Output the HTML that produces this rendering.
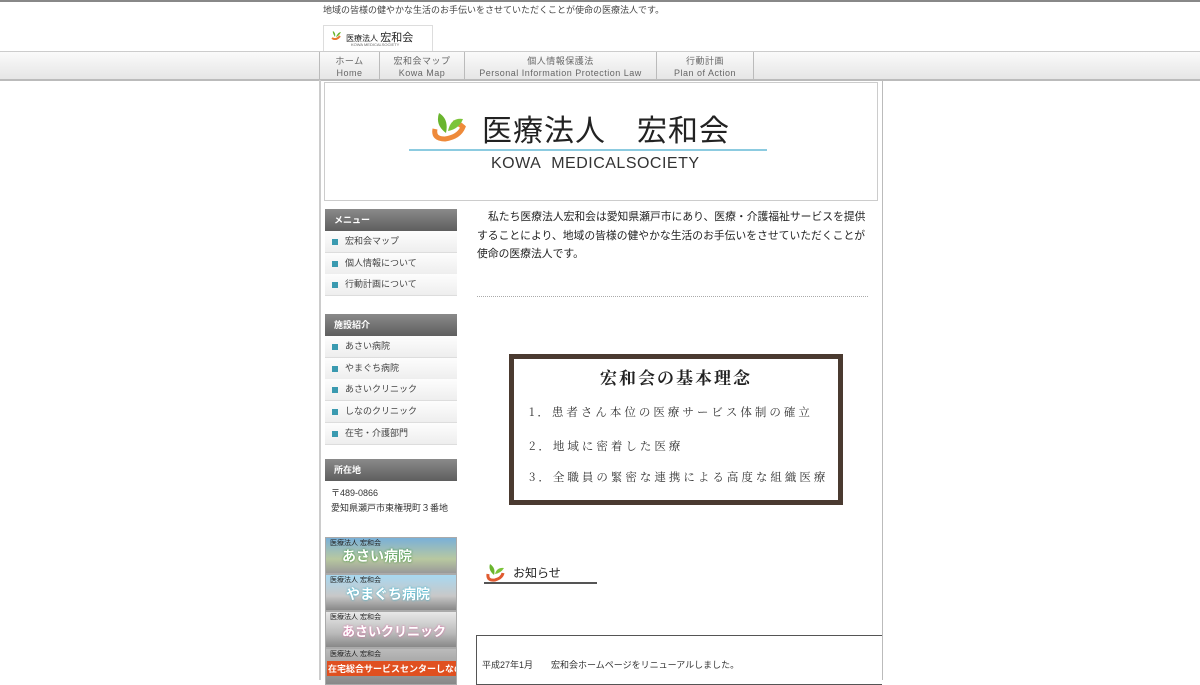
<!DOCTYPE html>
<html><head><meta charset="utf-8"><style>
*{margin:0;padding:0;box-sizing:border-box}
body{width:1200px;height:675px;overflow:hidden;background:#fff;font-family:"Liberation Sans","Noto Sans CJK JP",sans-serif;color:#333;position:relative}
.abs{position:absolute}
.tag{left:323px;top:3px;font-size:9px;color:#444}
.logo{left:323px;top:25px;width:110px;height:26px;border:1px solid #ddd;border-bottom:none;background:#fff}
.nav{left:0;top:51px;width:1200px;height:30px;background:linear-gradient(#fafafa,#e6e6e6);border-top:1px solid #ccc;border-bottom:2px solid #bbb}
.nav div{position:absolute;top:0;height:28px;border-right:1px solid #bbb;text-align:center;font-size:9px;color:#666;line-height:12px;padding-top:3px;letter-spacing:.5px}
.wrap{left:319px;top:80px;width:564px;height:600px;border-left:2px solid #ccc;border-right:1px solid #bbb}
.banner{left:324px;top:82px;width:554px;height:119px;border:1px solid #ccc;background:#fff}
.side h3{position:absolute;left:325px;width:132px;height:22px;background:linear-gradient(#8a8a8a,#5e5e5e);color:#fff;font-size:9px;font-weight:bold;line-height:22px;padding-left:9px}
.item{position:absolute;left:325px;width:132px;height:22px;background:linear-gradient(#fdfdfd,#eee);border-bottom:1px solid #ddd;font-size:9px;color:#444;line-height:21px;padding-left:20px}
.item:before{content:"";position:absolute;left:7px;top:8px;width:6px;height:6px;background:#3a9ab0}
.rib{position:absolute;left:325px;width:132px;height:37px;border:1px solid #aaa;overflow:hidden;white-space:nowrap}
</style></head><body>
<div class="abs" style="left:0;top:0;width:1200px;height:2px;background:#888"></div>
<div class="abs tag">地域の皆様の健やかな生活のお手伝いをさせていただくことが使命の医療法人です。</div>
<div class="abs logo">
 <svg class="abs" style="left:6px;top:4px" width="12" height="10"><path d="M2 8 Q6 11 10 6" stroke="#e87a30" stroke-width="2" fill="none"/><path d="M5 7 Q2 2 3 1 Q6 3 5 7Z M6 7 Q8 2 11 2 Q9 6 6 7Z" fill="#6ab52e"/></svg>
 <span class="abs" style="left:22px;top:3px;font-size:8px;color:#222">医療法人 <span style="font-size:11px">宏和会</span></span>
 <span class="abs" style="left:27px;top:16px;font-size:4px;color:#666">KOWA MEDICALSOCIETY</span>
</div>
<div class="abs nav">
 <div style="left:319px;width:61px;border-left:1px solid #bbb">ホーム<br>Home</div>
 <div style="left:380px;width:85px">宏和会マップ<br>Kowa Map</div>
 <div style="left:465px;width:192px">個人情報保護法<br>Personal Information Protection Law</div>
 <div style="left:657px;width:97px">行動計画<br>Plan of Action</div>
</div>
<div class="abs wrap"></div>
<div class="abs banner">
 <svg class="abs" style="left:104px;top:24px" width="38" height="36"><path d="M6 22 Q4 32 16 32 Q30 30 34 20 Q30 16 24 16" stroke="#ee8a3a" stroke-width="5" fill="none"/><path d="M17 26 Q6 18 10 6 Q20 12 17 26Z" fill="#6ab52e"/><path d="M19 24 Q22 10 34 12 Q30 22 19 24Z" fill="#7cc43a"/></svg>
 <div class="abs" style="left:157px;top:23px;font-size:30px;color:#222;letter-spacing:1px">医療法人　宏和会</div>
 <div class="abs" style="left:84px;top:66px;width:358px;height:2px;background:#8ccbe0"></div>
 <div class="abs" style="left:166px;top:72px;font-size:16px;color:#333;letter-spacing:.5px">KOWA&nbsp;&nbsp;MEDICALSOCIETY</div>
</div>
<div class="side">
 <h3 style="top:209px">メニュー</h3>
 <div class="item" style="top:231px">宏和会マップ</div>
 <div class="item" style="top:253px">個人情報について</div>
 <div class="item" style="top:274px">行動計画について</div>
 <h3 style="top:314px">施設紹介</h3>
 <div class="item" style="top:336px">あさい病院</div>
 <div class="item" style="top:358px">やまぐち病院</div>
 <div class="item" style="top:379px">あさいクリニック</div>
 <div class="item" style="top:401px">しなのクリニック</div>
 <div class="item" style="top:423px">在宅・介護部門</div>
 <h3 style="top:459px">所在地</h3>
 <div class="abs" style="left:331px;top:486px;font-size:9px;line-height:15px;color:#333">〒489-0866<br>愛知県瀬戸市東権現町３番地</div>
 <div class="rib" style="top:537px;background:linear-gradient(#7ab0d8,#b8c8a0 60%,#999)"><span class="abs" style="left:16px;top:8px;font-size:14px;color:#fff;font-weight:bold;text-shadow:0 0 2px #2a8a2a">あさい病院</span><span class="abs" style="left:4px;top:0;font-size:7px;color:#222">医療法人 宏和会</span></div>
 <div class="rib" style="top:574px;background:linear-gradient(#a8d8f0,#c8c8c8 60%,#888)"><span class="abs" style="left:20px;top:9px;font-size:14px;color:#fff;font-weight:bold;text-shadow:0 0 2px #20b0d0">やまぐち病院</span><span class="abs" style="left:4px;top:0;font-size:7px;color:#222">医療法人 宏和会</span></div>
 <div class="rib" style="top:611px;background:linear-gradient(#e8e8e8,#bbb 60%,#888)"><span class="abs" style="left:16px;top:9px;font-size:13px;color:#fff;font-weight:bold;text-shadow:0 0 2px #e060a0">あさいクリニック</span><span class="abs" style="left:4px;top:0;font-size:7px;color:#222">医療法人 宏和会</span></div>
 <div class="rib" style="top:648px;background:linear-gradient(#bbb,#888)"><span class="abs" style="left:1px;top:12px;font-size:9px;color:#fff;font-weight:bold;background:#e05020;padding:1px">在宅総合サービスセンターしなの</span><span class="abs" style="left:4px;top:0;font-size:7px;color:#222">医療法人 宏和会</span></div>
</div>
<div class="abs" style="left:477px;top:208px;width:394px;font-size:10.8px;line-height:18.5px;color:#222;text-indent:11px">私たち医療法人宏和会は愛知県瀬戸市にあり、医療・介護福祉サービスを提供することにより、地域の皆様の健やかな生活のお手伝いをさせていただくことが使命の医療法人です。</div>
<div class="abs" style="left:477px;top:296px;width:391px;border-top:1px dotted #aaa"></div>
<div class="abs" style="left:509px;top:354px;width:334px;height:151px;background:#4a3a30;padding:5px">
 <div style="background:#fff;width:100%;height:100%;position:relative;font-family:'Noto Serif CJK SC','Liberation Serif',serif;color:#333">
  <div class="abs" style="left:0;width:100%;text-align:center;top:5px;font-size:17px;font-weight:bold;letter-spacing:2px;color:#222">宏和会の基本理念</div>
  <div class="abs" style="left:15px;top:45px;font-size:11.5px;letter-spacing:3px">1．患者さん本位の医療サービス体制の確立</div>
  <div class="abs" style="left:15px;top:79px;font-size:11.5px;letter-spacing:3px">2．地域に密着した医療</div>
  <div class="abs" style="left:15px;top:110px;font-size:11.5px;letter-spacing:3px">3．全職員の緊密な連携による高度な組織医療</div>
 </div>
</div>
<svg class="abs" style="left:485px;top:562px" width="22" height="20"><path d="M3 12 Q2 19 10 18 Q17 16 18 11" stroke="#e05a30" stroke-width="3" fill="none"/><path d="M9 13 Q3 8 5 2 Q11 6 9 13Z" fill="#6ab52e"/><path d="M10 12 Q12 5 19 6 Q16 11 10 12Z" fill="#7cc43a"/></svg>
<div class="abs" style="left:513px;top:564px;font-size:12px;color:#222">お知らせ</div>
<div class="abs" style="left:484px;top:582px;width:113px;height:2px;background:#555"></div>
<div class="abs" style="left:476px;top:635px;width:406px;height:50px;border:1px solid #555;border-right:none"></div>
<div class="abs" style="left:482px;top:658px;font-size:9px;color:#333">平成27年1月　　宏和会ホームページをリニューアルしました。</div>
</body></html>
